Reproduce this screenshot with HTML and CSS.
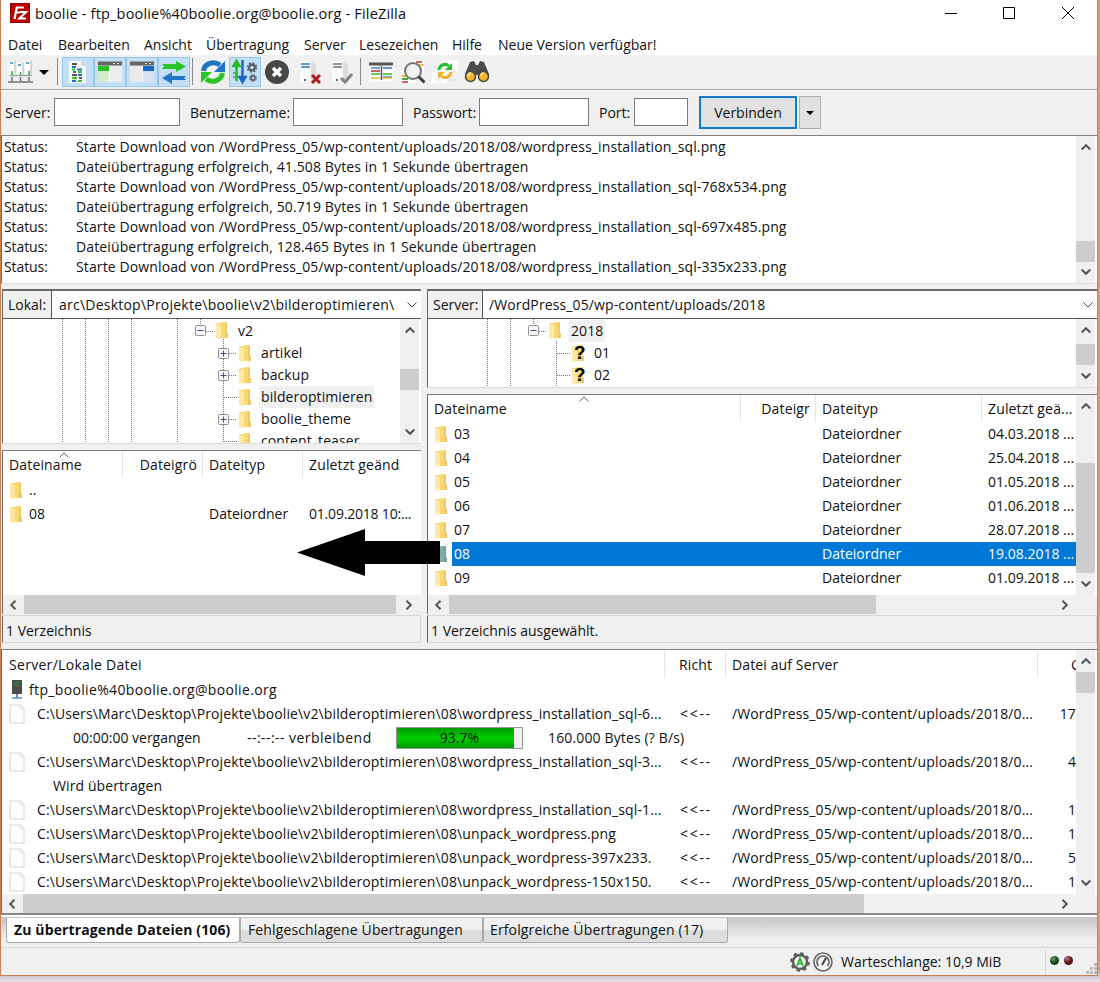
FILE: index.html
```html
<!DOCTYPE html>
<html lang="de">
<head>
<meta charset="utf-8">
<title>boolie - FileZilla</title>
<link rel="stylesheet" href="styles.css">
</head>
<body>
<svg class="defs" width="0" height="0">
  <symbol id="folder" viewBox="0 0 14 17"><path d="M1 1h5l1-1h5v11l1 1v4H6L3 17v-1H1z" fill="#f8d775"/><path d="M1 1l5 2v13l-3 1v-1H1z" fill="#fde9a5"/><path d="M10 1h2v10l1 1v4h-3z" fill="#efc962"/></symbol>
  <symbol id="plus" viewBox="0 0 11 11"><rect x=".5" y=".5" width="10" height="10" rx="1" fill="#f7f7f7" stroke="#919191"/><path d="M2.500 5.500h6M5.500 2.500v6" stroke="#3a4a9c"/></symbol>
  <symbol id="minus" viewBox="0 0 11 11"><rect x=".5" y=".5" width="10" height="10" rx="1" fill="#f7f7f7" stroke="#919191"/><path d="M2.500 5.500h6" stroke="#3a4a9c"/></symbol>
  <symbol id="doc" viewBox="0 0 16 20"><path d="M1 1h10l4 4v14H1z" fill="#fefefe" stroke="#e4e4e4" stroke-width="1.600"/><path d="M11 1v4h4" fill="none" stroke="#e4e4e4"/></symbol>
  <symbol id="up" viewBox="0 0 10 8"><path d="M.7 6.500L5 2.200l4.300 4.300" fill="none" stroke="#555" stroke-width="2"/></symbol>
  <symbol id="down" viewBox="0 0 10 8"><path d="M.7 1.500L5 5.800l4.300-4.300" fill="none" stroke="#555" stroke-width="2"/></symbol>
  <symbol id="left" viewBox="0 0 8 10"><path d="M6.500 .7L2.200 5l4.300 4.300" fill="none" stroke="#555" stroke-width="2"/></symbol>
  <symbol id="right" viewBox="0 0 8 10"><path d="M1.500 .7L5.800 5 1.500 9.300" fill="none" stroke="#555" stroke-width="2"/></symbol>
  <symbol id="chev" viewBox="0 0 10 6"><path d="M.5 .5L5 5l4.500-4.500" fill="none" stroke="#444"/></symbol>
  <symbol id="sort" viewBox="0 0 10 6"><path d="M.5 5.500L5 1l4.500 4.500" fill="none" stroke="#666"/></symbol>
  <symbol id="tower" viewBox="0 0 28 28"><path d="M5 3h11l4 3v18H5z" fill="#fafafa"/><path d="M16 3l5 3v18h-5z" fill="#dcdcdc"/><circle cx="10" cy="22" r="1" fill="#333"/></symbol>
  <symbol id="gear" viewBox="0 0 10 10"><circle cx="5" cy="5" r="2.600" fill="none" stroke="#555d66" stroke-width="2"/><circle cx="5" cy="5" r="4.100" fill="none" stroke="#555d66" stroke-width="1.500" stroke-dasharray="1.600 1.620"/></symbol>
</svg>
<div class="window">
  <header class="title">
    <svg class="logo" viewBox="0 0 20 20"><rect width="20" height="20" fill="#b30000"/><rect x=".5" y=".5" width="19" height="19" fill="none" stroke="#8e0000" stroke-dasharray="1 1"/><path d="M4.500 16L6.800 4.500h7M5.500 9.500h4.500M10 9h6l-6.500 6.500h6.500" fill="none" stroke="#fff" stroke-width="2.200"/></svg>
    <span class="caption">boolie - ftp_boolie%40boolie.org@boolie.org - FileZilla</span>
    <svg class="winbtns" viewBox="0 0 130 14"><path d="M1 7.500h12M59.500 1.500h11v11h-11zM118 1l12 12M130 1l-12 12" fill="none" stroke="#000"/></svg>
  </header>
  <nav class="menu"><span class="m1">Datei</span><span class="m2">Bearbeiten</span><span class="m3">Ansicht</span><span class="m4">Übertragung</span><span class="m5">Server</span><span class="m6">Lesezeichen</span><span class="m7">Hilfe</span><span class="m8">Neue Version verfügbar!</span></nav>

  <div class="toolbar">
    <span class="tb site"><svg viewBox="0 0 28 28"><path d="M3 3h7v13H3zM11 5h7v12h-7zM19 3h7v13h-7z" fill="#fff"/><path d="M8 3h2v13H8zM16 5h2v12h-2zM24 3h2v13h-2z" fill="#d6d6d6"/><path d="M4 5h3M12 7h3M20 5h3" stroke="#337fc6" stroke-width="1.500"/><path d="M4 17.500h22" stroke="#a5a5a5" stroke-width="1.500"/><path d="M6 13v4M14.500 14v3M23 13v4" stroke="#37a837" stroke-width="1.500"/><path d="M6 19v4M14.500 19v4M23 19v4M2 24h25" stroke="#6e6e6e" stroke-width="1.500"/></svg></span>
    <span class="drop"></span><i class="sep s1"></i>
    <span class="tb on"><svg viewBox="0 0 28 28"><path d="M5 3h12l5 5v17H5z" fill="#fafafa"/><path d="M17 3v5h5" fill="#d8d8d8"/><path d="M8 6h5M8 17h5M15 20h3" stroke="#555" stroke-width="2"/><path d="M8 9h4M13 11.500h5M9 14h3M14 17h4M8 23h4" stroke="#246fbd" stroke-width="2"/><path d="M8 11.500h3M14 14h4M8 20h5M14 23h4" stroke="#35c232" stroke-width="2"/></svg></span>
    <span class="tb on"><svg viewBox="0 0 28 28"><path d="M2 4h24v20H2z" fill="#e9e9e9"/><path d="M2 8h11v5H2z" fill="#24bf25"/><path d="M2 13h11v11H2z" fill="#d4eccb"/><path d="M14 8h12v16H14z" fill="#ececec"/><path d="M13.500 8v16" stroke="#fff"/><path d="M2 3.500h24v4H2z" fill="#656565"/><path d="M17 5.500h2m2 0h2" stroke="#ddd"/></svg></span>
    <span class="tb on"><svg viewBox="0 0 28 28"><path d="M2 4h24v20H2z" fill="#e9e9e9"/><path d="M15 8h11v5H15z" fill="#1769c7"/><path d="M15 13h11v11H15z" fill="#d5e4f5"/><path d="M14.500 8v16" stroke="#fff"/><path d="M2 3.500h24v4H2z" fill="#656565"/><path d="M17 5.500h2m2 0h2" stroke="#ddd"/></svg></span>
    <span class="tb on"><svg viewBox="0 0 28 28"><path d="M2 6h14V3l10 5.500L16 14v-3H2l2-2.500z" fill="#29c32a"/><path d="M26 18H12v-4L2 20l10 6v-4h14l-2-2z" fill="#2075c9"/></svg></span>
    <i class="sep s2"></i>
    <span class="tb"><svg viewBox="0 0 28 28"><path d="M4.500 13A10 9 0 0 1 21 7" fill="none" stroke="#1e73c3" stroke-width="5"/><path d="M26 3v11H15z" fill="#1e73c3"/><path d="M23.500 15A10 9 0 0 1 7 21" fill="none" stroke="#2bc42b" stroke-width="5"/><path d="M2 25V14h11z" fill="#2bc42b"/></svg></span>
    <span class="tb on"><svg viewBox="0 0 28 28"><path d="M5.500 7v16M5.500 3L2.500 8h6z" stroke="#25bc28" stroke-width="2.500" fill="#25bc28"/><path d="M2 15h3M2 19h3" stroke="#25bc28" stroke-width="1.500"/><path d="M11.500 2v19M8.500 19h6l-3 5z" stroke="#1969c2" stroke-width="2.500" fill="#1969c2"/><use href="#gear" x="15.500" y="4" width="11" height="11"/><use href="#gear" x="18" y="16" width="8" height="8"/></svg></span>
    <span class="tb"><svg viewBox="0 0 28 28"><circle cx="14" cy="14" r="12" fill="#474747"/><path d="M10 10l8 8M18 10l-8 8" stroke="#fff" stroke-width="3.500"/></svg></span>
    <span class="tb"><svg viewBox="0 0 28 28"><use href="#tower" width="28" height="28"/><path d="M6 6h9M6 9h9" stroke="#3178bd" stroke-width="1.500"/><path d="M17 17l8 8M25 17l-8 8" stroke="#b51a1a" stroke-width="3"/></svg></span>
    <span class="tb"><svg viewBox="0 0 28 28"><use href="#tower" width="28" height="28"/><path d="M6 6h9M6 9h9" stroke="#777" stroke-width="1.500"/><path d="M14 20l4 4 7-8" fill="none" stroke="#828282" stroke-width="3"/></svg></span>
    <i class="sep s3"></i>
    <span class="tb"><svg viewBox="0 0 28 28"><path d="M2 5h24v19H2z" fill="#fafafa"/><path d="M2 4.500h24v3H2z" fill="#555"/><path d="M4 10h9M16 19h9" stroke="#4b81b9" stroke-width="1.500"/><path d="M16 10h9" stroke="#3b76c0" stroke-width="1.500"/><path d="M4 13h9" stroke="#ba2d2d" stroke-width="1.500"/><path d="M4 16h9M16 16h9" stroke="#35b942" stroke-width="1.500"/><path d="M4 20h9M16 20h9" stroke="#e8bc28" stroke-width="1.500"/><path d="M14.500 8v14" stroke="#555" stroke-width="1.500"/></svg></span>
    <span class="tb"><svg viewBox="0 0 28 28"><path d="M12 2h13v13H12zM2 12h15v13H2z" fill="#fff"/><path d="M17 4h6" stroke="#b33" stroke-width="1.500"/><path d="M20 7h5" stroke="#ecac25" stroke-width="1.500"/><path d="M3 18h6" stroke="#edb12a" stroke-width="2"/><path d="M3 21h6" stroke="#3bac34" stroke-width="2"/><path d="M3 24h6" stroke="#b33" stroke-width="1.500"/><circle cx="14" cy="13" r="8" fill="#eee" fill-opacity=".85" stroke="#737373" stroke-width="2"/><path d="M19.500 18.500l6 6" stroke="#3d3d3d" stroke-width="3"/></svg></span>
    <span class="tb"><svg viewBox="0 0 28 28"><path d="M15 2h10l2 2v9H15zM1 14h15v11H1z" fill="#fff"/><path d="M17 22h8M4 22h7" stroke="#ddd"/><path d="M8 12a6 6 0 0 1 10-4" fill="none" stroke="#2abb32" stroke-width="3"/><path d="M21 5v7h-7z" fill="#2abb32"/><path d="M20 14a6 6 0 0 1-10 4" fill="none" stroke="#eeb42c" stroke-width="3"/><path d="M7 21v-7h7z" fill="#eeb42c"/></svg></span>
    <span class="tb"><svg viewBox="0 0 28 28"><path d="M7 4l4-1 2 4h2l2-4 4 1 5 12-8 4-2-3h-4l-2 3-8-4z" fill="#4c4c4c"/><circle cx="7.500" cy="18.500" r="5" fill="#f3b62d" stroke="#444" stroke-width="1.500"/><circle cx="20.500" cy="18.500" r="5" fill="#f3b62d" stroke="#444" stroke-width="1.500"/><path d="M5 18a3 3 0 0 1 3-3M18 18a3 3 0 0 1 3-3" fill="none" stroke="#fff2a5" stroke-width="1.500"/></svg></span>
  </div>

  <div class="quick">
    <label class="q1">Server:</label><span class="field f1"></span>
    <label class="q2">Benutzername:</label><span class="field f2"></span>
    <label class="q3">Passwort:</label><span class="field f3"></span>
    <label class="q4">Port:</label><span class="field f4"></span>
    <button class="connect">Verbinden</button><button class="connect-more"><span class="caret"></span></button>
  </div>

  <section class="log sunk">
    <div class="log-lines">
      <div><b>Status:</b><span>Starte Download von /WordPress_05/wp-content/uploads/2018/08/wordpress_installation_sql.png</span></div>
      <div><b>Status:</b><span>Dateiübertragung erfolgreich, 41.508 Bytes in 1 Sekunde übertragen</span></div>
      <div><b>Status:</b><span>Starte Download von /WordPress_05/wp-content/uploads/2018/08/wordpress_installation_sql-768x534.png</span></div>
      <div><b>Status:</b><span>Dateiübertragung erfolgreich, 50.719 Bytes in 1 Sekunde übertragen</span></div>
      <div><b>Status:</b><span>Starte Download von /WordPress_05/wp-content/uploads/2018/08/wordpress_installation_sql-697x485.png</span></div>
      <div><b>Status:</b><span>Dateiübertragung erfolgreich, 128.465 Bytes in 1 Sekunde übertragen</span></div>
      <div><b>Status:</b><span>Starte Download von /WordPress_05/wp-content/uploads/2018/08/wordpress_installation_sql-335x233.png</span></div>
    </div>
    <div class="vbar"><svg><use href="#up"/></svg><i class="thumb t-log"></i><svg><use href="#down"/></svg></div>
  </section>

  <main class="panes">
    <section class="pane local">
      <div class="path"><span class="path-label">Lokal:</span><span class="path-text">arc\Desktop\Projekte\boolie\v2\bilderoptimieren\</span><svg class="chev"><use href="#chev"/></svg></div>
      <div class="tree">
        <div class="tree-body">
          <svg class="guides" viewBox="0 0 400 124"><path d="M59.500 0v124M82.500 0v124M105.500 0v124M128.500 0v124M174.500 0v124M197.500 0v8M203 12.500h8M220.500 20v104M226 34.500h8M226 56.500h8M221 78.500h13M226 100.500h8M221 122.500h13" fill="none" stroke="#777" stroke-dasharray="1 1"/></svg>
          <div class="node root"><svg class="box"><use href="#minus"/></svg><svg class="fold"><use href="#folder"/></svg><span>v2</span></div>
          <div class="node"><svg class="box"><use href="#plus"/></svg><svg class="fold"><use href="#folder"/></svg><span>artikel</span></div>
          <div class="node"><svg class="box"><use href="#plus"/></svg><svg class="fold"><use href="#folder"/></svg><span>backup</span></div>
          <div class="node"><i class="box"></i><svg class="fold"><use href="#folder"/></svg><span class="hl">bilderoptimieren</span></div>
          <div class="node"><svg class="box"><use href="#plus"/></svg><svg class="fold"><use href="#folder"/></svg><span>boolie_theme</span></div>
          <div class="node"><i class="box"></i><svg class="fold"><use href="#folder"/></svg><span>content_teaser</span></div>
        </div>
        <div class="vbar"><svg><use href="#up"/></svg><i class="thumb t-ltree"></i><svg><use href="#down"/></svg></div>
      </div>
      <div class="list sunk">
        <div class="list-main">
          <div class="lrow head"><span>Dateiname<svg class="sort"><use href="#sort"/></svg></span><span class="num">Dateigrö</span><span>Dateityp</span><span>Zuletzt geänd</span></div>
          <div class="lrow"><span><svg class="fold"><use href="#folder"/></svg>..</span></div>
          <div class="lrow"><span><svg class="fold"><use href="#folder"/></svg>08</span><span></span><span>Dateiordner</span><span class="date">01.09.2018 10:...</span></div>
        </div>
        <div class="hbar"><svg><use href="#left"/></svg><i class="hthumb ht-l"></i><svg><use href="#right"/></svg></div>
      </div>
      <div class="pane-status">1 Verzeichnis</div>
    </section>

    <section class="pane remote">
      <div class="path"><span class="path-label">Server:</span><span class="path-text">/WordPress_05/wp-content/uploads/2018</span><svg class="chev"><use href="#chev"/></svg></div>
      <div class="tree">
        <div class="tree-body">
          <svg class="guides" viewBox="0 0 400 124"><path d="M59.500 0v68M82.500 0v68M105.500 0v8M111 12.500h8M128.500 22v46M129 34.500h13M129 56.500h13" fill="none" stroke="#777" stroke-dasharray="1 1"/></svg>
          <div class="node root"><svg class="box"><use href="#minus"/></svg><svg class="fold"><use href="#folder"/></svg><span class="hl">2018</span></div>
          <div class="node"><i class="box"></i><span class="unknown"><svg class="fold"><use href="#folder"/></svg><b>?</b></span><span>01</span></div>
          <div class="node"><i class="box"></i><span class="unknown"><svg class="fold"><use href="#folder"/></svg><b>?</b></span><span>02</span></div>
        </div>
        <div class="vbar"><svg><use href="#up"/></svg><i class="thumb t-rtree"></i><svg><use href="#down"/></svg></div>
      </div>
      <div class="list sunk">
        <div class="list-top">
          <div class="list-main">
            <div class="rrow head"><span>Dateiname<svg class="sort"><use href="#sort"/></svg></span><span class="num">Dateigr</span><span>Dateityp</span><span>Zuletzt geä...</span></div>
            <div class="rrow"><span><svg class="fold"><use href="#folder"/></svg>03</span><span></span><span>Dateiordner</span><span>04.03.2018 ...</span></div>
            <div class="rrow"><span><svg class="fold"><use href="#folder"/></svg>04</span><span></span><span>Dateiordner</span><span>25.04.2018 ...</span></div>
            <div class="rrow"><span><svg class="fold"><use href="#folder"/></svg>05</span><span></span><span>Dateiordner</span><span>01.05.2018 ...</span></div>
            <div class="rrow"><span><svg class="fold"><use href="#folder"/></svg>06</span><span></span><span>Dateiordner</span><span>01.06.2018 ...</span></div>
            <div class="rrow"><span><svg class="fold"><use href="#folder"/></svg>07</span><span></span><span>Dateiordner</span><span>28.07.2018 ...</span></div>
            <div class="rrow sel"><span><svg class="fold"><use href="#folder"/></svg>08</span><span></span><span>Dateiordner</span><span>19.08.2018 ...</span></div>
            <div class="rrow"><span><svg class="fold"><use href="#folder"/></svg>09</span><span></span><span>Dateiordner</span><span>01.09.2018 ...</span></div>
          </div>
          <div class="vbar"><svg><use href="#up"/></svg><i class="thumb t-rlist"></i><svg><use href="#down"/></svg></div>
        </div>
        <div class="hbar wide"><svg><use href="#left"/></svg><i class="hthumb ht-r"></i><svg><use href="#right"/></svg></div>
      </div>
      <div class="pane-status">1 Verzeichnis ausgewählt.</div>
    </section>
    <svg class="arrow" viewBox="0 0 143 48"><path d="M0 23.500L68 0v12h75v23H68v12z"/></svg>
  </main>

  <section class="queue sunk">
    <div class="queue-top">
      <div class="queue-main">
        <div class="qrow head"><span class="qh">Server/Lokale Datei</span><span>Richt</span><span>Datei auf Server</span><span class="g">G</span></div>
        <div class="qserver"><svg viewBox="0 0 12 20"><path d="M1 0h10v14H1z" fill="#4c4c4c"/><path d="M3 2.500h6M3 5h6" stroke="#289838"/><path d="M6 14v4" stroke="#5b6b7b" stroke-width="1.500"/><path d="M1 18h10" stroke="#4a93cb" stroke-width="1.500"/></svg><span>ftp_boolie%40boolie.org@boolie.org</span></div>
        <div class="qrow"><span><svg class="doc"><use href="#doc"/></svg>C:\Users\Marc\Desktop\Projekte\boolie\v2\bilderoptimieren\08\wordpress_installation_sql-6...</span><span class="dir">&lt;&lt;--</span><span>/WordPress_05/wp-content/uploads/2018/0...</span><span class="size">17</span></div>
        <div class="qprog"><span class="p1">00:00:00 vergangen</span><span class="p2">--:--:-- verbleibend</span><span class="bar"><i style="width:93.7%"></i><em>93.7%</em></span><span class="p3">160.000 Bytes (? B/s)</span></div>
        <div class="qrow"><span><svg class="doc"><use href="#doc"/></svg>C:\Users\Marc\Desktop\Projekte\boolie\v2\bilderoptimieren\08\wordpress_installation_sql-3...</span><span class="dir">&lt;&lt;--</span><span>/WordPress_05/wp-content/uploads/2018/0...</span><span class="size">4</span></div>
        <div class="qnote">Wird übertragen</div>
        <div class="qrow"><span><svg class="doc"><use href="#doc"/></svg>C:\Users\Marc\Desktop\Projekte\boolie\v2\bilderoptimieren\08\wordpress_installation_sql-1...</span><span class="dir">&lt;&lt;--</span><span>/WordPress_05/wp-content/uploads/2018/0...</span><span class="size">1</span></div>
        <div class="qrow"><span><svg class="doc"><use href="#doc"/></svg>C:\Users\Marc\Desktop\Projekte\boolie\v2\bilderoptimieren\08\unpack_wordpress.png</span><span class="dir">&lt;&lt;--</span><span>/WordPress_05/wp-content/uploads/2018/0...</span><span class="size">1</span></div>
        <div class="qrow"><span><svg class="doc"><use href="#doc"/></svg>C:\Users\Marc\Desktop\Projekte\boolie\v2\bilderoptimieren\08\unpack_wordpress-397x233.</span><span class="dir">&lt;&lt;--</span><span>/WordPress_05/wp-content/uploads/2018/0...</span><span class="size">5</span></div>
        <div class="qrow"><span><svg class="doc"><use href="#doc"/></svg>C:\Users\Marc\Desktop\Projekte\boolie\v2\bilderoptimieren\08\unpack_wordpress-150x150.</span><span class="dir">&lt;&lt;--</span><span>/WordPress_05/wp-content/uploads/2018/0...</span><span class="size">1</span></div>
      </div>
      <div class="vbar"><svg><use href="#up"/></svg><i class="thumb t-queue"></i><svg><use href="#down"/></svg></div>
    </div>
    <div class="hbar wide"><svg><use href="#left"/></svg><i class="hthumb ht-q"></i><svg><use href="#right"/></svg></div>
  </section>

  <div class="tabs"><span class="tab active">Zu übertragende Dateien (106)</span><span class="tab tb2">Fehlgeschlagene Übertragungen</span><span class="tab tb3">Erfolgreiche Übertragungen (17)</span></div>

  <footer class="statusbar">
    <svg class="sicon" viewBox="0 0 20 20"><circle cx="10" cy="10" r="7" fill="#fff" stroke="#5a5a5a" stroke-width="2.500"/><circle cx="10" cy="10" r="8.800" fill="none" stroke="#5a5a5a" stroke-width="2" stroke-dasharray="3.450 3.450"/><path d="M7 14l3-8 3 8M8 11.500h4" fill="none" stroke="#2dbb3a" stroke-width="2"/></svg>
    <svg class="sicon" viewBox="0 0 20 20"><circle cx="10" cy="10" r="9" fill="#f4f4f4" stroke="#666" stroke-width="1.600"/><path d="M5.500 14a6 6 0 1 1 9 0" fill="none" stroke="#777" stroke-width="2"/><path d="M9 13l4-7" stroke="#444" stroke-width="2"/></svg>
    <span class="qsize">Warteschlange: 10,9 MiB</span>
    <span class="leds"><i class="led green"></i><i class="led red"></i></span>
    <svg class="grip" viewBox="0 0 12 12"><path d="M9 1h3v3H9zM5 5h3v3H5zM9 5h3v3H9zM1 9h3v3H1zM5 9h3v3H5zM9 9h3v3H9z" fill="#bbb"/></svg>
  </footer>
</div>
</body>
</html>
```

FILE: styles.css
```css
* { box-sizing: border-box; }
body {
  margin: 0; width: 1100px; height: 982px; overflow: hidden;
  background: linear-gradient(90deg, transparent 1098px, #e29b6d 1098px) 0 0 / 1100px 972px no-repeat, linear-gradient(#c9c6c8 975px, #e8e3e8 982px);
  font: 14px/20px "Open Sans", "Noto Sans", sans-serif; color: #111;
}
svg { display: block; flex: none; }
.defs { position: absolute; }
i, em { font-style: normal; }
.window {
  width: 1098px; height: 976px; display: flex; flex-direction: column;
  background: #f0f0f0; border: 1px solid #cd7e50; border-top: 0; white-space: nowrap;
}
.window > * { flex: none; }
.title { height: 30px; padding: 3px 23px 0 9px; display: flex; background: #fff; }
.logo { width: 20px; height: 20px; }
.caption { margin-left: 5px; flex: 1; line-height: 22px; font-size: 14.500px; letter-spacing: .18px; }
.winbtns { width: 130px; height: 14px; margin-top: 3px; }
.menu { height: 25px; padding-left: 7px; background: #fff; line-height: 30px; display: flex; }
.m1 { width: 50px; } .m2 { width: 86px; } .m3 { width: 62px; } .m4 { width: 98px; }
.m5 { width: 55px; } .m6 { width: 93px; } .m7 { width: 46px; }

.toolbar { height: 36px; padding: 2px 0 0 3px; display: flex; align-items: flex-start; border-bottom: 1px solid #fff; box-shadow: inset 0 -1px #a0a0a0; }
.tb { width: 32px; height: 30px; padding: 1px 2px 0; flex: none; }
.tb svg { width: 28px; height: 28px; }
.on { background: #c3dff5; border: 1px solid #96c8ee; padding: 0 1px; }
.drop, .caret { border: 5px solid transparent; border-top-color: #000; border-bottom: 0; }
.drop { margin: 13px 0 0 3px; }
.sep { width: 1px; height: 27px; margin-top: 1px; background: #888; flex: none; }
.s1 { margin-left: 8px; margin-right: 4px; }
.s2 { margin-left: 2px; margin-right: 4px; }
.s3 { margin-left: 3px; margin-right: 4px; }

.quick { height: 44px; display: flex; padding: 0 0 1px 4px; align-items: center; }
.quick label { flex: none; }
.q1 { width: 49px; } .q2 { width: 103px; } .q3 { width: 66px; } .q4 { width: 35px; }
.field { height: 28px; background: #fff; border: 1px solid #7a7a7a; flex: none; position: relative; top: -1px; }
.f1 { width: 126px; margin-right: 10px; } .f2 { width: 110px; margin-right: 10px; }
.f3 { width: 110px; margin-right: 10px; } .f4 { width: 54px; margin-right: 11px; }
.connect { width: 98px; height: 33px; font: inherit; border: 2px solid #1a78c2; background: #e1e1e1; padding: 0; color: inherit; box-shadow: inset 0 0 0 1px #c9ebf9; }
.connect-more { width: 22px; height: 33px; margin-left: 2px; border: 1px solid #adadad; background: #e1e1e1; padding: 0; display: grid; place-items: center; }
.caret { border-width: 4px 4px 0; }

.sunk { border-top: 1px solid #808080; border-left: 1px solid #696969; background: #fff; }
.log { height: 149px; display: flex; border-bottom: 1px solid #ddd; }
.log-lines { flex: 1; padding: 1px 0 0 2px; letter-spacing: .12px; }
.log-lines div { display: flex; }
.log-lines b { width: 72px; font-weight: 400; letter-spacing: -.1px; }
.vbar { width: 19px; margin-right: 2px; background: #f0f0f0; display: flex; flex-direction: column; align-items: center; padding: 7px 0; flex: none; }
.vbar svg { width: 10px; height: 8px; }
.vbar svg:last-child { margin-top: auto; }
.thumb { width: 19px; background: #cdcdcd; }
.t-log { height: 21px; margin-top: 90px; }
.t-ltree { height: 21px; margin-top: 35px; }
.t-rtree { height: 21px; margin-top: 10px; }
.t-rlist { height: 110px; margin-top: 53px; }
.t-queue { height: 21px; margin-top: 7px; }
.hbar { height: 19px; background: #f0f0f0; display: flex; align-items: center; padding-left: 6px; }
.hbar svg { width: 8px; height: 10px; }
.hbar svg:last-child { margin-left: auto; margin-right: 8px; }
.hbar.wide svg:last-child { margin-right: 28px; }
.hthumb { height: 19px; background: #cdcdcd; margin-left: 7px; }
.ht-l { width: 372px; } .ht-r { width: 427px; } .ht-q { width: 841px; }

.panes { position: relative; height: 359px; margin-top: 5px; display: flex; gap: 6px; padding-left: 1px; }
.pane { display: flex; flex-direction: column; }
.local { width: 419px; }
.remote { width: 670px; }
.path { height: 30px; flex: none; border-top: 2px solid #6a6a6a; border-left: 1px solid #696969; border-bottom: 1px solid #555; display: flex; background: #fff; line-height: 27px; }
.path-label { background: #f0f0f0; border-right: 1px solid #555; padding-left: 5px; width: 49px; }
.remote .path-label { width: 55px; }
.path-text { flex: 1; padding-left: 7px; letter-spacing: .23px; }
.remote .path-text { padding-left: 6px; letter-spacing: .12px; }
.chev { width: 10px; height: 6px; margin: 11px 4px 0 0; }
.tree { display: flex; background: #fff; border-left: 1px solid #696969; border-bottom: 1px solid #ddd; flex: none; overflow: hidden; }
.local .tree { height: 125px; margin-bottom: 6px; }
.remote .tree { height: 69px; margin-bottom: 6px; }
.tree-body { flex: 1; position: relative; overflow: hidden; }
.guides { position: absolute; left: 0; top: 0; width: 400px; height: 124px; }
.node { position: relative; height: 22px; display: flex; align-items: center; line-height: 22px; padding-left: 215px; letter-spacing: .1px; }
.node.root { padding-left: 192px; height: 23px; }
.remote .node { padding-left: 123px; }
.remote .node.root { padding-left: 100px; }
.box { width: 11px; height: 11px; flex: none; }
.node .fold { margin-left: 9px; }
.node > span:last-child { margin-left: 7px; padding: 0 2px; }
.hl { background: #f0f0f0; }
.fold { width: 14px; height: 17px; }
.unknown { position: relative; }
.unknown b { position: absolute; left: 12px; top: -2px; font-family: "Liberation Sans", sans-serif; font-size: 19px; line-height: 20px; color: #000; }

.list { display: flex; flex-direction: column; flex: none; overflow: hidden; }
.local .list { height: 164px; }
.remote .list { height: 220px; }
.list-top, .queue-top { display: flex; flex: 1; min-height: 0; }
.list-main { flex: 1; min-height: 0; overflow: hidden; }
.lrow, .rrow { display: grid; height: 24px; line-height: 24px; }
.lrow { grid-template-columns: 120px 80px 100px 1fr; }
.rrow { grid-template-columns: 313px 75px 166px 1fr; }
.rrow.head { grid-template-columns: 313px 75px 172px 1fr; }
.rrow.head { grid-template-columns: 313px 75px 166px 1fr; }
.lrow span, .rrow span { display: flex; align-items: center; padding-left: 6px; }
.lrow:not(.head) span:first-child, .rrow:not(.head) span:first-child { gap: 6px; }
.lrow .date { letter-spacing: -.2px; }
.head { height: 27px; letter-spacing: .15px; }
.head span { border-right: 1px solid #e5e5e5; }
.head span:last-child { border: 0; }
.head .num { justify-content: flex-end; padding-right: 5px; }
.head span:first-child { position: relative; }
.sort { width: 10px; height: 6px; position: absolute; left: 56px; top: 1px; }
.remote .sort { left: 151px; }
.sel > span { background: #0078d7; color: #fff; }
.sel > span:first-child { background: linear-gradient(90deg, #fff 24px, #0078d7 24px); }
.sel .fold { filter: hue-rotate(120deg) saturate(.4) brightness(.75); }
.pane-status { height: 28px; margin-top: 1px; background: #f0f0f0; border: 1px solid #d7d7d7; border-left: 1px solid #696969; line-height: 29px; padding-left: 3px; flex: none; }
.arrow { position: absolute; left: 296px; top: 240px; width: 143px; height: 48px; }

.queue { height: 266px; margin-top: 1px; border-bottom: 2px solid #888; display: flex; flex-direction: column; }
.queue-main { flex: 1; overflow: hidden; padding: 1px 0 0 1px; }
.qrow { display: grid; grid-template-columns: 662px 61px 312px 1fr; height: 24px; line-height: 24px; letter-spacing: .12px; }
.qrow > span { display: flex; align-items: center; overflow: hidden; padding-left: 6px; }
.qrow.head { height: 27px; }
.qrow .qh { letter-spacing: .3px; }
.qrow.head > span:nth-child(2) { padding-left: 14px; }
.qrow > span:nth-child(3) { padding-left: 6px; }
.qrow .g { padding-left: 33px; }
.qrow .dir { letter-spacing: 1.700px; padding-left: 15px; }
.qrow .size { justify-content: flex-end; }
.doc { width: 16px; height: 20px; margin-right: 12px; }
.qserver { height: 24px; display: flex; align-items: center; padding-left: 8px; gap: 6px; letter-spacing: .34px; }
.qserver svg { width: 12px; height: 20px; }
.qprog { height: 24px; display: flex; align-items: center; padding-left: 70px; }
.p1 { width: 174px; } .p2 { width: 149px; letter-spacing: .45px; } .p3 { letter-spacing: .14px; }
.bar { width: 127px; height: 22px; margin-right: 25px; border: 1px solid #999; background: #f0f0f0; position: relative; }
.bar i { display: block; height: 20px; background: linear-gradient(#009800, #00d200 50%, #009800); }
.bar em { position: absolute; left: 0; right: 0; top: 0; text-align: center; }
.qnote { height: 24px; line-height: 24px; padding-left: 50px; letter-spacing: .1px; }

.tabs { height: 33px; border-top: 2px solid #fff; border-bottom: 1px solid #d5d5d5; background: linear-gradient(#c5c5c5, #f0f0f0 75%); display: flex; padding: 1px 0 0 5px; }
.tab { height: 25px; border: 1px solid #aaa; border-top: 0; border-radius: 0 0 3px 3px; padding-left: 5px; line-height: 24px; letter-spacing: .13px; background: linear-gradient(#f0f0f0 50%, #ddd 50%); }
.active { width: 234px; font-weight: 700; background: #fff; padding-left: 7px; }
.tb2 { width: 243px; padding-left: 7px; } .tb3 { width: 245px; padding-left: 6px; }
.statusbar { height: 27px; display: flex; align-items: center; padding: 1px 0 0 789px; }
.sicon { width: 20px; height: 20px; margin-right: 3px; }
.qsize { width: 204px; margin-left: 5px; }
.leds { height: 25px; padding-left: 4px; margin-left: 3px; border-left: 1px solid #d5d5d5; display: flex; align-items: center; gap: 5px; }
.led { width: 9px; height: 9px; margin-top: -3px; border-radius: 50%; }
.green { background: radial-gradient(circle at 35% 30%, #7a9b7a, #145014 45%, #092a09); }
.red { background: radial-gradient(circle at 35% 30%, #b57a7a, #681520 45%, #3a090e); }
.grip { width: 12px; height: 12px; margin: 11px 0 0 12px; }
```
